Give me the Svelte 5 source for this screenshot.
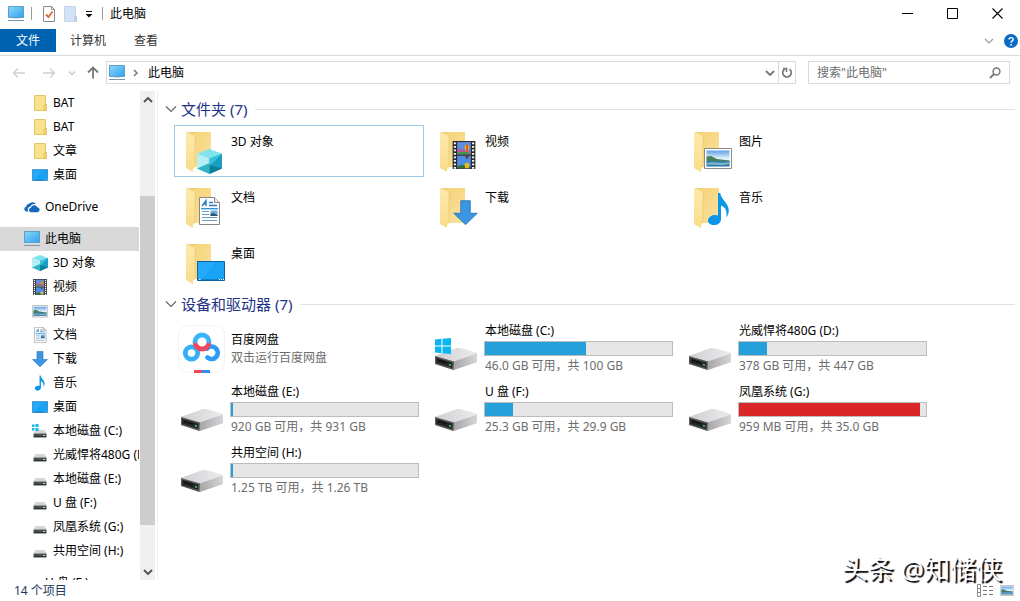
<script>
    const sections = [
        {
            rows: [
                { icon: 'folder', label: 'BAT' },
                { icon: 'folder', label: 'BAT' },
                { icon: 'folder', label: '文章' },
                { icon: 'desktop', label: '桌面' }
            ]
        },
        { rows: [{ icon: 'onedrive', label: 'OneDrive', root: true }] },
        {
            rows: [
                { icon: 'pc', label: '此电脑', root: true, active: true },
                { icon: 'cube', label: '3D 对象' },
                { icon: 'video', label: '视频' },
                { icon: 'picture', label: '图片' },
                { icon: 'doc', label: '文档' },
                { icon: 'download', label: '下载' },
                { icon: 'music', label: '音乐' },
                { icon: 'desktop', label: '桌面' },
                { icon: 'windrive', label: '本地磁盘 (C:)' },
                { icon: 'drive', label: '光威悍将480G (D:)' },
                { icon: 'drive', label: '本地磁盘 (E:)' },
                { icon: 'drive', label: 'U 盘 (F:)' },
                { icon: 'drive', label: '凤凰系统 (G:)' },
                { icon: 'drive', label: '共用空间 (H:)' }
            ]
        },
        { rows: [{ icon: 'drive', label: 'U 盘 (F:)', root: true }] }
    ];

    // box is the place of the overlay on the 48px folder: x, y, width, height
    const folders = [
        { icon: 'cube', label: '3D 对象', box: [19, 22, 25, 25] },
        { icon: 'video', label: '视频', box: [19, 14, 26, 28] },
        { icon: 'picture', label: '图片', box: [18, 21, 28, 21] },
        { icon: 'doc', label: '文档', box: [21, 14, 21, 28] },
        { icon: 'download', label: '下载', box: [21, 17, 25, 25] },
        { icon: 'music', label: '音乐', box: [22, 10, 21, 32] },
        { icon: 'desktop', label: '桌面', box: [19, 22, 28, 20] }
    ];

    const drives = [
        { label: '百度网盘', info: '双击运行百度网盘', app: true },
        { label: '本地磁盘 (C:)', info: '46.0 GB 可用，共 100 GB', used: 54, system: true },
        { label: '光威悍将480G (D:)', info: '378 GB 可用，共 447 GB', used: 15 },
        { label: '本地磁盘 (E:)', info: '920 GB 可用，共 931 GB', used: 1 },
        { label: 'U 盘 (F:)', info: '25.3 GB 可用，共 29.9 GB', used: 15 },
        { label: '凤凰系统 (G:)', info: '959 MB 可用，共 35.0 GB', used: 97 },
        { label: '共用空间 (H:)', info: '1.25 TB 可用，共 1.26 TB', used: 1 }
    ];

    let selected = $state(0);
    let search = $state('');
</script>

{#snippet art(kind)}
    {#if kind === 'cube'}
        <path d="M8 0 16 3 8 6 0 3Z" fill="#7fe3ee" />
        <path d="M0 3 8 6V16L0 12.500Z" fill="#b5eef3" />
        <path d="M0 12.500 8 9V16Z" fill="#2fb4c6" />
        <path d="M16 3 8 6V16L16 12.500Z" fill="#1b9fc0" />
        <path d="M16 3 8 6V11Z" fill="#35c3db" />
        <path d="M8 16 16 12.500 8 10Z" fill="#0b7f9d" />
    {:else if kind === 'video'}
        <path d="M1 0H15V16H1Z" fill="#2b2b2b" />
        <path d="M3.800 .6H12.200V7.600H3.800Z" fill="#5c8fe0" />
        <path d="M3.800 8.400H12.200V15.600H3.800Z" fill="#4d8de6" />
        <path d="M3.800 5 6 4.500 12.200 6.200V7.600H3.800Z" fill="#c84fa0" />
        <path d="M3.800 6.500 8 6 12.200 7V7.600H3.800Z" fill="#3f9a46" />
        <path d="M3.800 14.500 7 13.500 12.200 15V15.600H3.800Z" fill="#356f3a" />
        <path d="M9.800 2a1.400 1.800 0 0 1 1.400 2L10.300 6H9.300L8.400 4A1.400 1.800 0 0 1 9.800 2Z" fill="#f3b61b" />
        <path d="M9.500 2H10.200V6H9.500Z" fill="#c8201d" />
        <path d="M9.800 12.500a1.400 1.300 0 0 1 1.400 1.500L10.800 15.600H8.800L8.400 14A1.400 1.300 0 0 1 9.800 12.500Z" fill="#f3b61b" />
        <path d="M8.500 8.400H11L9.800 10.500Z" fill="#7a3524" />
        <path d="M2.400 .8V16M13.600 .8V16" stroke="#fff" stroke-width="1.300" stroke-dasharray="1.100 .9" />
    {:else if kind === 'picture'}
        <path d="M.5 .5H27.500V20.500H.5Z" fill="#fff" stroke="#8b8b8b" />
        <path d="M2.500 2.500H25.500V18.500H2.500Z" fill="url(#sky)" />
        <path d="M2.500 8.500 7 8 13 11 25.500 12.500V14H2.500Z" fill="#4b7f5b" />
        <path d="M2.500 13H25.500V18.500H2.500Z" fill="#2f79a8" />
        <path d="M2.500 15C9 13 17 16 25.500 14V16C17 18 9 16 2.500 17Z" fill="#7fb6c9" />
    {:else if kind === 'doc'}
        <path d="M.5 .5H15.500L20.500 5.500V27.500H.5Z" fill="#fff" stroke="#858585" />
        <path d="M15.500 .5V5.500H20.500" fill="#e8e8e8" stroke="#858585" />
        <path d="M3 9 7 3.500V9M4.500 7H7M10 5.500H14M10 8.500H18" fill="none" stroke="#2a7ac0" stroke-width="1.300" />
        <path d="M2 11.700H19" stroke="#1f91dc" stroke-width="1.300" />
        <path d="M3 14.500H10M3 17.500H10M3 20.500H18M3 23.500H18" stroke="#6f9cc4" />
        <path d="M11.500 13.500H18.500V19H11.500Z" fill="#72a9dc" />
        <path d="M11.500 17 14 16 18.500 18V19H11.500Z" fill="#26576e" />
    {:else if kind === 'download'}
        <path d="M5 .5H11V8.500H15.500L8 15.800.5 8.500H5Z" fill="#3c96e4" stroke="#2477bd" stroke-width=".6" />
    {:else if kind === 'music'}
        <path d="M10 0H12.300C12.800 6 20.500 10 20.800 17 20.800 20 19.800 22.500 18.300 24.500 19.500 17.500 17 14 13 12.500V26C13 30 9.500 32 6 32 2.500 32 0 30 0 27.500 0 24.500 3 22 7 22 8.200 22 9.200 22.200 10 22.600Z" fill="#0c96e8" />
    {:else if kind === 'desktop'}
        <path d="M.5 .5H27.500V19.500H.5Z" fill="#18a3f7" stroke="#0b62a8" />
        <path d="M1 18.500H27V19.300H1Z" fill="#0b5e9c" />
        <path d="M1 1H19L5 18H1Z" fill="#35b0fb" opacity=".5" />
        <path d="M2 18.500H3.500M22 18.500H23M24 18.500H25M26 18.500H27" stroke="#fff" />
    {/if}
{/snippet}

{#snippet driveBody()}
    <path d="M3 31 25 23.300 45 28.300V37L21.500 45 3 39Z" fill="#c5c5c7" />
    <path d="M3 31 25 23.300C26.500 23 27.500 23 29 23.300L44 27.500C45 28 45 28.500 44.500 29L22 36.500Z" fill="url(#metal)" />
    <path d="M22 36.500 45 28.700V37L21.500 45Z" fill="url(#side)" />
    <path d="M3 31 22 36.500 21.500 45 3 39Z" fill="#5a5a5c" />
    <path d="M4.200 32.800 20.300 37.500V43L4.200 38Z" fill="#252727" />
    <path d="M6 34.500 15 37.200V38.800L6 36Z" fill="#0f1010" />
    <path d="M17 39 19 39.600V41L17 40.400Z" fill="#43d163" />
{/snippet}

{#snippet smallIcon(kind)}
    {#if kind === 'folder'}
        <svg class="icon" viewBox="0 0 16 16" aria-hidden="true">
            <path d="M2.500 .5H13.500V15.500H2.500Z" fill="#fbe08c" stroke="#e6c566" />
            <path d="M12 10.500 14.500 9V15.500H12Z" fill="#f2cf6b" stroke="#d9b34c" stroke-width=".6" />
        </svg>
    {:else if kind === 'onedrive'}
        <svg class="icon" viewBox="0 0 16 16" aria-hidden="true">
            <path d="M4.500 12.500H2.500A2.400 2.400 0 0 1 2 7.800 3.600 3.600 0 0 1 5 4.800 4.400 4.400 0 0 1 12 5.200C8.500 4.500 6.600 6.200 6.300 7.800 3.800 8 3.200 10.500 4.500 12.500Z" fill="#1469ba" />
            <path d="M6.800 13.200A2.300 2.300 0 0 1 6.800 8.700 3.600 3.600 0 0 1 13.400 8.300 2.500 2.500 0 0 1 13.800 13.200Z" fill="#1469ba" />
        </svg>
    {:else if kind === 'pc'}
        <svg class="icon" viewBox="0 0 16 16" aria-hidden="true">
            <path d="M.5 .5H15.500V11.500H.5Z" fill="url(#screen)" stroke="#5b9cc8" />
            <path d="M0 14.500H16" stroke="#7c98ab" />
            <path d="M5 12.500H11" stroke="#d5dfe6" />
        </svg>
    {:else if kind === 'drive' || kind === 'windrive'}
        <svg class="icon" viewBox="0 0 16 16" aria-hidden="true">
            <path d="M3.500 7H12.500L14.500 10.500H1.500Z" fill="#d3d4d5" />
            <path d="M1.500 10.500H14.500V14.500H1.500Z" fill="#4a4d4f" />
            <path d="M2 13.500H14" stroke="#303234" />
            <path d="M11 12.500H13" stroke="#b7dfc2" />
            {#if kind === 'windrive'}
                <path d="M0 1.500H2.500V4H0ZM3.500 1H6.500V4H3.500ZM0 5H2.500V7.500H0ZM3.500 5H6.500V8H3.500Z" fill="#15b8ea" />
            {/if}
        </svg>
    {:else if kind === 'desktop' || kind === 'picture'}
        <svg class="icon" viewBox="0 -4 28 28" aria-hidden="true">{@render art(kind)}</svg>
    {:else if kind === 'doc'}
        <svg class="icon" viewBox="-4 0 28 28" aria-hidden="true">{@render art(kind)}</svg>
    {:else if kind === 'music'}
        <svg class="icon" viewBox="-6 -1 34 34" aria-hidden="true">{@render art(kind)}</svg>
    {:else}
        <svg class="icon" viewBox="0 0 16 16" aria-hidden="true">{@render art(kind)}</svg>
    {/if}
{/snippet}

{#snippet chevron()}
    <svg width="12" height="12" viewBox="0 0 12 12" aria-hidden="true">
        <path d="M1 3.500 6 8.500 11 3.500" fill="none" stroke="currentColor" stroke-width="1.200" />
    </svg>
{/snippet}

<div class="window">
    <svg class="defs" aria-hidden="true">
        <defs>
            <linearGradient id="screen" x1="0" y1="0" x2="1" y2="1">
                <stop offset="0" stop-color="#8bd9fb" />
                <stop offset="1" stop-color="#2fa2ee" />
            </linearGradient>
            <linearGradient id="sky" x1="0" y1="0" x2="0" y2="1">
                <stop offset="0" stop-color="#5ea0e6" />
                <stop offset=".5" stop-color="#e4f1fb" />
            </linearGradient>
            <linearGradient id="back" x1="0" y1="0" x2="1" y2="1">
                <stop offset="0" stop-color="#f3cf72" />
                <stop offset="1" stop-color="#fbe4a0" />
            </linearGradient>
            <linearGradient id="flap" x1="0" y1="0" x2="0" y2="1">
                <stop offset="0" stop-color="#fdeaae" />
                <stop offset="1" stop-color="#f9dc88" />
            </linearGradient>
            <linearGradient id="metal" x1="0" y1="0" x2="1" y2="0">
                <stop offset="0" stop-color="#cfcfd1" />
                <stop offset="1" stop-color="#ececee" />
            </linearGradient>
            <linearGradient id="side" x1="0" y1="0" x2="1" y2="0">
                <stop offset="0" stop-color="#a5a5a8" />
                <stop offset="1" stop-color="#d6d6d8" />
            </linearGradient>
            <linearGradient id="ring" x1="0" y1="0" x2="0" y2="1">
                <stop offset=".5" stop-color="#38b4fa" />
                <stop offset=".65" stop-color="#f0475c" />
            </linearGradient>
        </defs>
    </svg>

    <header class="title-bar">
        {@render smallIcon('pc')}
        <span class="divider"></span>
        <button class="quick" aria-label="属性">
            <svg width="14" height="16" viewBox="0 0 14 16">
                <path d="M1.500 .5H9.500L12.500 3.500V15.500H1.500Z" fill="#fff" stroke="#8a8a8a" />
                <path d="M9.500 .5V3.500H12.500" fill="none" stroke="#8a8a8a" />
                <path d="M4 8.500 6.500 11 10.500 5.500" fill="none" stroke="#e06a3a" stroke-width="1.800" />
            </svg>
        </button>
        <button class="quick" aria-label="新建文件夹">
            <svg width="14" height="16" viewBox="0 0 14 16">
                <path d="M.5 .5H11.500V15.500H.5Z" fill="#d3e2f5" stroke="#c5d6ec" />
                <path d="M10.500 10.500H12.500V15.500H10.500Z" fill="#c5d8f0" stroke="#b7cbe5" />
            </svg>
        </button>
        <button class="quick more" aria-label="自定义快速访问工具栏">
            <svg width="8" height="8" viewBox="0 0 8 8">
                <path d="M1 1.500H7" stroke="#111" />
                <path d="M.5 4H7.500L4 7.500Z" fill="#111" />
            </svg>
        </button>
        <span class="divider"></span>
        <span class="title">此电脑</span>
        <div class="window-buttons">
            <button aria-label="最小化">
                <svg width="11" height="11" viewBox="0 0 11 11"><path d="M0 5.500H11" stroke="#000" /></svg>
            </button>
            <button aria-label="最大化">
                <svg width="11" height="11" viewBox="0 0 11 11"><path d="M.5 .5H10.500V10.500H.5Z" fill="none" stroke="#000" /></svg>
            </button>
            <button aria-label="关闭">
                <svg width="11" height="11" viewBox="0 0 11 11"><path d="M.5 .5 10.500 10.500M10.500 .5.5 10.500" stroke="#000" stroke-width="1.100" /></svg>
            </button>
        </div>
    </header>

    <div class="ribbon">
        <button class="tab file">文件</button>
        <button class="tab">计算机</button>
        <button class="tab">查看</button>
        <div class="ribbon-end">
            <button class="expand" aria-label="展开功能区">
                <svg width="10" height="10" viewBox="0 0 10 10"><path d="M1 3 5 7 9 3" fill="none" stroke="#999" stroke-width="1.200" /></svg>
            </button>
            <button aria-label="帮助">
                <svg width="14" height="14" viewBox="0 0 14 14">
                    <circle cx="7" cy="7" r="7" fill="#0b6bc4" />
                    <path d="M5 5.400C5 3 9.200 3 9.200 5.400 9.200 7 7.100 6.800 7.100 8.800" fill="none" stroke="#fff" stroke-width="1.400" />
                    <path d="M6.300 9.900H7.900V11.400H6.300Z" fill="#fff" />
                </svg>
            </button>
        </div>
    </div>

    <div class="address-row">
        <div class="history">
            <button class="wide" aria-label="后退" disabled>
                <svg width="14" height="12" viewBox="0 0 14 12"><path d="M13 6H1.500M6 1.500 1.500 6 6 10.500" fill="none" stroke="#d0d0d0" stroke-width="1.500" /></svg>
            </button>
            <button class="wide" aria-label="前进" disabled>
                <svg width="14" height="12" viewBox="0 0 14 12"><path d="M1 6H12.500M8 1.500 12.500 6 8 10.500" fill="none" stroke="#d0d0d0" stroke-width="1.500" /></svg>
            </button>
            <button class="recent" aria-label="最近浏览的位置">
                <svg width="8" height="8" viewBox="0 0 8 8"><path d="M1 2.500 4 5.500 7 2.500" fill="none" stroke="#c8c8c8" stroke-width="1.300" /></svg>
            </button>
            <button class="up" aria-label="上移">
                <svg width="12" height="13" viewBox="0 0 12 13"><path d="M6 12.500V1.500M1 6.500 6 1.500 11 6.500" fill="none" stroke="#777" stroke-width="1.800" /></svg>
            </button>
        </div>
        <div class="address">
            {@render smallIcon('pc')}
            <svg class="crumb" width="6" height="8" viewBox="0 0 6 8" aria-hidden="true"><path d="M1 1 4 4 1 7" fill="none" stroke="#777" stroke-width="1.500" /></svg>
            <button class="path">此电脑</button>
            <button class="drop" aria-label="以前的位置">
                <svg width="10" height="8" viewBox="0 0 10 8"><path d="M1 2 5 6 9 2" fill="none" stroke="#777" stroke-width="1.800" /></svg>
            </button>
            <button class="refresh" aria-label="刷新">
                <svg width="12" height="12" viewBox="0 0 12 12">
                    <path d="M8.500 2.200A4.300 4.300 0 1 1 3.500 2.200" fill="none" stroke="#777" stroke-width="1.700" />
                    <path d="M2 1.500H5.500V5" fill="none" stroke="#777" stroke-width="1.600" />
                </svg>
            </button>
        </div>
        <div class="search">
            <input type="text" bind:value={search} placeholder={'搜索"此电脑"'} aria-label="搜索此电脑" />
            <svg width="12" height="12" viewBox="0 0 12 12" aria-hidden="true">
                <circle cx="7.500" cy="4.500" r="3.400" fill="none" stroke="#777" stroke-width="1.500" />
                <path d="M5 7 1 11" stroke="#777" stroke-width="1.800" />
            </svg>
        </div>
    </div>

    <div class="body">
        <nav class="tree">
            {#each sections as section}
                <ul>
                    {#each section.rows as row}
                        <li>
                            <a href="#tree" class:root={row.root} class:active={row.active}>
                                {@render smallIcon(row.icon)}
                                <span>{row.label}</span>
                            </a>
                        </li>
                    {/each}
                </ul>
            {/each}
        </nav>
        <div class="scrollbar">
            <button aria-label="向上滚动">
                <svg width="10" height="8" viewBox="0 0 10 8"><path d="M1 6 5 2 9 6" fill="none" stroke="#505050" stroke-width="1.800" /></svg>
            </button>
            <span class="space before"></span>
            <span class="thumb"></span>
            <span class="space after"></span>
            <button aria-label="向下滚动">
                <svg width="10" height="8" viewBox="0 0 10 8"><path d="M1 2 5 6 9 2" fill="none" stroke="#505050" stroke-width="1.800" /></svg>
            </button>
        </div>

        <main>
            <section>
                <h2>{@render chevron()}文件夹 (7)</h2>
                <div class="grid">
                    {#each folders as folder, i}
                        <button class="tile" class:selected={selected === i} onclick={() => (selected = i)}>
                            <svg width="48" height="48" viewBox="0 0 48 48" aria-hidden="true">
                                <path d="M9 5H33V40H15Z" fill="url(#back)" />
                                <path d="M8 5 17 9V40L15 42V45L8 41Z" fill="url(#flap)" />
                                <path d="M17 9V40" stroke="#e8c46c" stroke-width=".6" />
                                {#if folder.icon === 'picture' || folder.icon === 'desktop' || folder.icon === 'doc' || folder.icon === 'music'}
                                    <g transform="translate({folder.box[0]} {folder.box[1]})">{@render art(folder.icon)}</g>
                                {:else}
                                    <svg x={folder.box[0]} y={folder.box[1]} width={folder.box[2]} height={folder.box[3]} viewBox="0 0 16 16" preserveAspectRatio="none">{@render art(folder.icon)}</svg>
                                {/if}
                            </svg>
                            <span class="name">{folder.label}</span>
                        </button>
                    {/each}
                </div>
            </section>

            <section>
                <h2>{@render chevron()}设备和驱动器 (7)</h2>
                <div class="grid">
                    {#each drives as drive}
                        <button class="tile drive">
                            <svg width="48" height="48" viewBox="0 0 48 48" aria-hidden="true">
                                {#if drive.app}
                                    <rect x=".5" y=".5" width="46" height="47" rx="9" fill="#fff" stroke="#f3f3f3" />
                                    <g fill="none" stroke-width="4.800">
                                        <circle cx="13.500" cy="28" r="6.200" stroke="#33b0f8" />
                                        <path d="M29 23.500A6.200 6.200 0 1 1 29.500 32.500" stroke="#2c9cf8" stroke-linecap="round" />
                                        <circle cx="24" cy="17" r="7" stroke="url(#ring)" />
                                    </g>
                                    <path d="M16 45H24V48H16Z" fill="#f0475c" />
                                    <path d="M24 45H32V48H24Z" fill="#2f8df5" />
                                {:else}
                                    {@render driveBody()}
                                    {#if drive.system}
                                        <path d="M3 14.500 9.500 13.800V20.500H3ZM10.500 13.700 19 13V20.500H10.500ZM3 21.500H9.500V28.200L3 27.500ZM10.500 21.500H19V29L10.500 28.300Z" fill="#0bb6ef" />
                                    {/if}
                                {/if}
                            </svg>
                            <span class="details">
                                <span class="name">{drive.label}</span>
                                {#if !drive.app}
                                    <span class="bar">
                                        <span class="fill" class:full={drive.used > 90} style="width: {drive.used}%"></span>
                                    </span>
                                {/if}
                                <span class="info">{drive.info}</span>
                            </span>
                        </button>
                    {/each}
                </div>
            </section>
        </main>
    </div>

    <footer>
        <span>14 个项目</span>
        <div class="views">
            <button aria-label="详细信息">
                <svg width="16" height="13" viewBox="0 0 16 13">
                    <path d="M.5 .5H3.500V12.500H.5ZM.5 4.500H3.500M.5 8.500H3.500" fill="#fff" stroke="#8a8a8a" />
                    <path d="M6 2.500H10M12 2.500H16M6 6.500H10M12 6.500H16M6 10.500H10M12 10.500H16" stroke="#777" />
                </svg>
            </button>
            <button aria-label="大图标">
                <svg width="14" height="11" viewBox="0 0 28 21">{@render art('picture')}</svg>
            </button>
        </div>
    </footer>

    <div class="watermark">头条 @知储侠</div>
</div>

<style>
    :global(body) {
        background: #fff;
    }

    .window {
        position: relative;
        display: flex;
        flex-direction: column;
        height: 100vh;
        font-family: "Noto Sans", "Noto Sans CJK SC", sans-serif;
        font-size: 12px;
        line-height: 18px;
        color: #000;
        overflow: hidden;
    }

    svg {
        display: block;
        flex: none;
    }

    .defs {
        width: 0;
        height: 0;
    }

    .icon {
        width: 16px;
        height: 16px;
    }

    button {
        display: flex;
        align-items: center;
        justify-content: center;
        margin: 0;
        padding: 0;
        border: 0;
        background: none;
        font: inherit;
        color: inherit;
    }

    .title-bar {
        display: flex;
        align-items: center;
        flex: none;
        height: 27px;
        padding-left: 8px;
        margin-bottom: 2px;
    }

    .divider {
        width: 1px;
        height: 13px;
        margin: 0 7px;
        background: #9a9a9a;
    }

    .divider:first-of-type {
        margin-right: 6px;
    }

    .quick {
        width: 22px;
        height: 22px;
    }

    .more {
        width: 13px;
    }

    .window-buttons {
        display: flex;
        margin-left: auto;
    }

    .window-buttons button {
        width: 45px;
        height: 27px;
    }

    .ribbon {
        display: flex;
        flex: none;
        padding-bottom: 3px;
        border-bottom: 1px solid #dadbdc;
    }

    .tab {
        height: 23px;
        padding: 1px 14px 0;
        color: #333;
    }

    .file {
        width: 56px;
        background: #0063b1;
        color: #fff;
    }

    .ribbon-end {
        display: flex;
        align-items: center;
        gap: 10px;
        margin-left: auto;
        padding: 1px 2px 0 0;
    }

    .address-row {
        display: flex;
        flex: none;
        padding: 5px 10px 7px 4px;
    }

    .history {
        display: flex;
    }

    .wide {
        width: 30px;
    }

    .recent {
        width: 16px;
    }

    .up {
        width: 26px;
    }

    .address,
    .search {
        display: flex;
        align-items: center;
        box-sizing: border-box;
        height: 23px;
        border: 1px solid #d9d9d9;
    }

    .address {
        flex: 1;
        padding-left: 2px;
    }

    .crumb {
        margin: 0 9px 0 8px;
    }

    .path {
        flex: 1;
        justify-content: flex-start;
    }

    .drop {
        width: 16px;
        height: 21px;
    }

    .refresh {
        width: 17px;
        height: 21px;
        border-left: 1px solid #d9d9d9;
    }

    .search {
        width: 202px;
        margin-left: 12px;
        padding: 0 8px;
    }

    .search input {
        flex: 1;
        min-width: 0;
        padding: 0;
        border: 0;
        outline: 0;
        background: none;
        font: inherit;
    }

    .search input::placeholder {
        color: #6d6d6d;
        opacity: 1;
    }

    .body {
        display: flex;
        flex: 1;
        min-height: 0;
    }

    .tree {
        width: 139px;
        flex: none;
        overflow: hidden;
    }

    ul {
        margin: 0 0 8px;
        padding: 0;
        list-style: none;
    }

    .tree a {
        display: flex;
        align-items: center;
        gap: 5px;
        height: 24px;
        padding-left: 32px;
        color: #000;
        text-decoration: none;
        white-space: nowrap;
    }

    .tree a.root {
        padding-left: 24px;
    }

    .tree a.active {
        background: #d9d9d9;
    }

    .scrollbar {
        display: flex;
        flex-direction: column;
        flex: none;
        width: 15px;
        margin-left: 1px;
        background: #f0f0f0;
    }

    .scrollbar button {
        width: 15px;
        height: 17px;
    }

    .before {
        flex: 88;
    }

    .thumb {
        flex: 329;
        background: #cdcdcd;
    }

    .after {
        flex: 38;
    }

    main {
        flex: 1;
        min-width: 0;
        margin-left: 2px;
        padding: 5px 5px 0 7px;
        border-left: 1px solid #f0f0f0;
        overflow: hidden;
    }

    section {
        margin-bottom: 2px;
    }

    h2 {
        display: flex;
        align-items: center;
        gap: 4px;
        height: 26px;
        margin: 0 0 3px;
        font-size: 15px;
        font-weight: 400;
        line-height: 26px;
        color: #1e3287;
    }

    h2 svg {
        color: #666;
    }

    h2::after {
        content: "";
        flex: 1;
        height: 1px;
        margin-left: 4px;
        background: #e2e2e2;
    }

    .grid {
        display: grid;
        grid-template-columns: repeat(auto-fill, 250px);
        gap: 4px;
        padding-left: 9px;
    }

    .tile {
        display: flex;
        align-items: flex-start;
        justify-content: flex-start;
        gap: 4px;
        height: 52px;
        padding: 1px 4px 1px 3px;
        border: 1px solid transparent;
        text-align: left;
    }

    .name,
    .info {
        padding-left: 1px;
    }

    .tile .name {
        padding-top: 6px;
    }

    .selected {
        border-color: #a0cbe8;
    }

    .drive {
        align-items: center;
        height: 57px;
    }

    .details {
        flex: 1;
        display: flex;
        flex-direction: column;
    }

    .drive .name {
        padding-top: 0;
    }

    .bar {
        box-sizing: border-box;
        height: 15px;
        margin: 1px 0;
        border: 1px solid #bcbcbc;
        background: #e6e6e6;
    }

    .fill {
        display: block;
        height: 100%;
        background: #26a0da;
    }

    .full {
        background: #da2626;
    }

    .info {
        color: #6d6d6d;
    }

    footer {
        display: flex;
        align-items: center;
        justify-content: space-between;
        flex: none;
        height: 21px;
        padding: 0 6px 0 14px;
        color: #1e395b;
    }

    .views {
        display: flex;
        gap: 7px;
    }

    .watermark {
        position: absolute;
        right: 18px;
        bottom: 14px;
        font-size: 26px;
        line-height: 36px;
        color: #fff;
        text-shadow: 2px 2px 1px #000;
        pointer-events: none;
    }
</style>
